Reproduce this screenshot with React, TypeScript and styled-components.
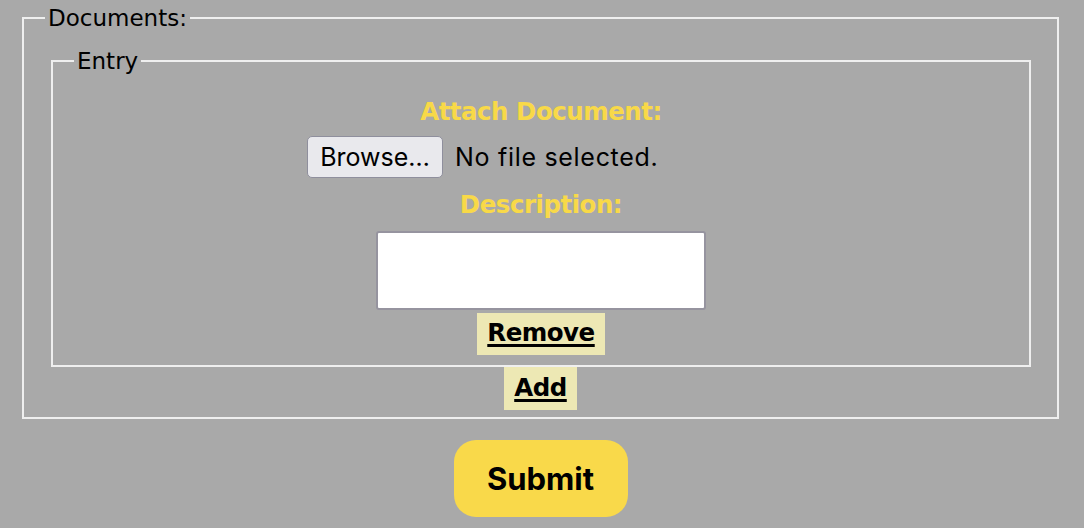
import React from "react";
import styled, { createGlobalStyle } from "styled-components";

const GlobalStyle = createGlobalStyle`
  html, body {
    margin: 0;
    padding: 0;
    background: #a9a9a9;
  }
  body {
    font-family: "DejaVu Sans", Verdana, sans-serif;
  }
`;

const Page = styled.form`
  display: flex;
  flex-direction: column;
  align-items: stretch;
  padding: 5px 25px 0 22px;
  min-height: 528px;
  box-sizing: border-box;
`;

const Fieldset = styled.fieldset<{ $inner?: boolean }>`
  margin: ${(p) => (p.$inner ? "0 26px 0 27px" : "0")};
  border: 2px solid #efefef;
  padding: ${(p) => (p.$inner ? "23px 0 10px" : "17px 0 7px")};
  display: flex;
  flex-direction: column;
  align-items: center;
  min-width: 0;
  align-self: stretch;
`;

const Legend = styled.legend`
  margin-left: 21px;
  padding: 0 3px;
  font-family: "DejaVu Sans", Verdana, sans-serif;
  font-size: 23px;
  line-height: 26px;
  color: #000;
`;

const Label = styled.label<{ $gapAfter: number }>`
  display: block;
  font-family: "DejaVu Sans", Verdana, sans-serif;
  font-weight: 700;
  font-size: 24.5px;
  letter-spacing: -0.5px;
  line-height: 30px;
  color: #f8d948;
  margin-bottom: ${(p) => p.$gapAfter}px;
`;

const FileRow = styled.div`
  display: flex;
  align-items: center;
  justify-content: flex-start;
  gap: 12px;
  width: 468px;
  margin-bottom: 12px;
  height: 42px;
`;

const BrowseButton = styled.button`
  box-sizing: border-box;
  width: 136px;
  height: 42px;
  padding: 0;
  background: #e9e9ed;
  border: 1px solid #8f8f9d;
  border-radius: 5px;
  font-family: Inter, "Liberation Sans", sans-serif;
  font-size: 25px;
  color: #000;
`;

const FileStatus = styled.span`
  font-family: Inter, "Liberation Sans", sans-serif;
  font-size: 25px;
  letter-spacing: 0.7px;
  color: #000;
  white-space: nowrap;
`;

const TextArea = styled.textarea`
  box-sizing: border-box;
  width: 330px;
  height: 79px;
  margin: 0 0 3px;
  background: #fff;
  border: 2px solid #96949f;
  border-radius: 3px;
  resize: none;
  display: block;
`;

const LinkBox = styled.a`
  display: block;
  box-sizing: border-box;
  padding: 0 10px;
  background: #ede8b4;
  font-family: "DejaVu Sans", Verdana, sans-serif;
  font-weight: 700;
  font-size: 24.5px;
  letter-spacing: -0.5px;
  color: #000;
  text-decoration: underline;
  text-decoration-thickness: 3px;
  text-underline-offset: 3px;
`;

const RemoveLink = styled(LinkBox)`
  height: 42px;
  line-height: 40px;
`;

const AddLink = styled(LinkBox)`
  height: 43px;
  line-height: 41px;
`;

const SubmitButton = styled.button`
  align-self: center;
  margin-top: 21px;
  width: 174px;
  height: 77px;
  border: none;
  border-radius: 22px;
  background: #f9d94a;
  font-family: Inter, "Liberation Sans", sans-serif;
  font-weight: 700;
  font-size: 31px;
  color: #000;
`;

export default function App() {
  return (
    <>
      <GlobalStyle />
      <Page onSubmit={(e) => e.preventDefault()}>
        <Fieldset>
          <Legend>Documents:</Legend>
          <Fieldset $inner>
            <Legend>Entry</Legend>
            <Label $gapAfter={9}>Attach Document:</Label>
            <FileRow>
              <BrowseButton type="button">Browse…</BrowseButton>
              <FileStatus>No file selected.</FileStatus>
            </FileRow>
            <Label $gapAfter={11}>Description:</Label>
            <TextArea />
            <RemoveLink href="#">Remove</RemoveLink>
          </Fieldset>
          <AddLink href="#">Add</AddLink>
        </Fieldset>
        <SubmitButton type="submit">Submit</SubmitButton>
      </Page>
    </>
  );
}
